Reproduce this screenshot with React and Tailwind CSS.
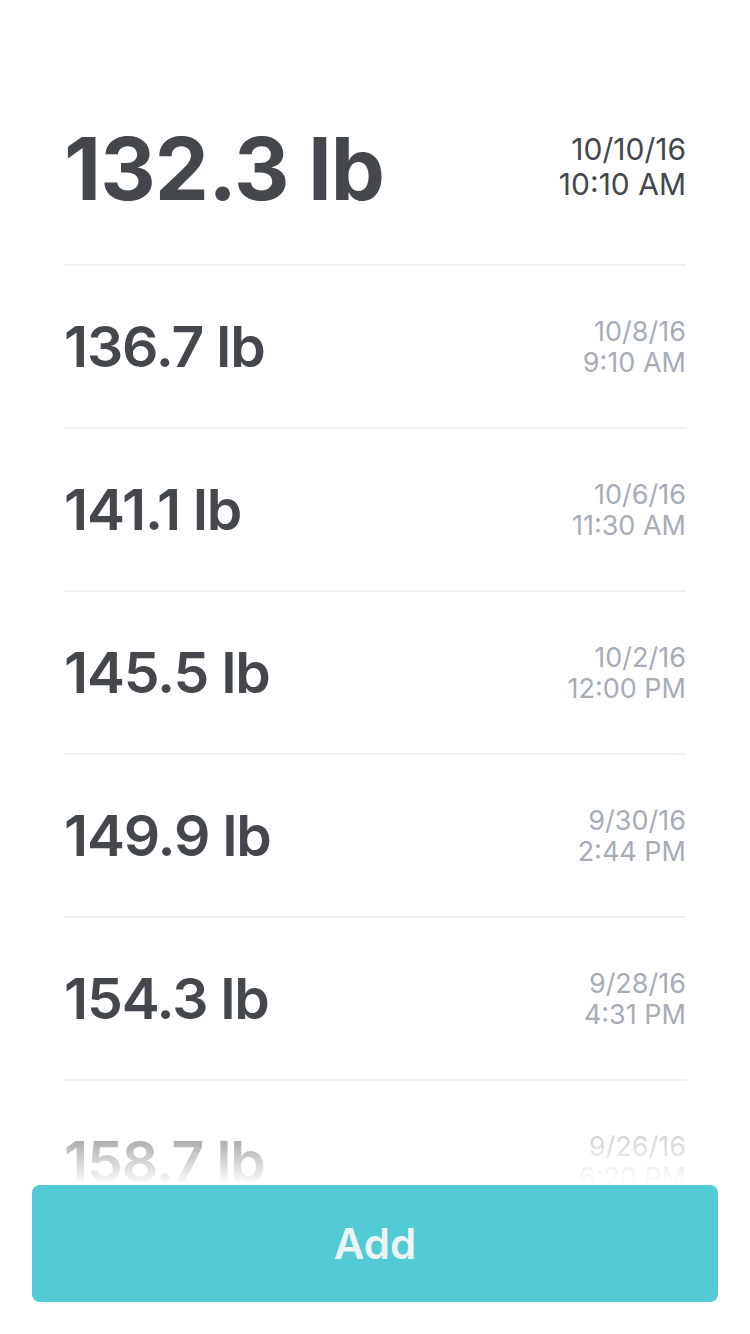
const entries = [
  { weight: '136.7 lb', date: '10/8/16', time: '9:10 AM' },
  { weight: '141.1 lb', date: '10/6/16', time: '11:30 AM' },
  { weight: '145.5 lb', date: '10/2/16', time: '12:00 PM' },
  { weight: '149.9 lb', date: '9/30/16', time: '2:44 PM' },
  { weight: '154.3 lb', date: '9/28/16', time: '4:31 PM' },
  { weight: '158.7 lb', date: '9/26/16', time: '6:20 PM' },
];

function App() {
  return (
    <div
      className="relative h-[1334px] w-[750px] overflow-hidden bg-white text-[#44474c]"
      style={{ fontFamily: 'Inter, "Open Sans", sans-serif' }}
    >
      <div className="px-[64px] pt-[110px]">
        {/* latest entry */}
        <div className="flex h-[156px] items-start justify-between border-b-2 border-[#f1f1f5] pt-[14px]">
          <div className="text-[86px] font-bold leading-[90px] tracking-[-0.01em]">132.3 lb</div>
          <div className="pt-[8px] text-right text-[30px] leading-[35px]">
            <div>10/10/16</div>
            <div>10:10 AM</div>
          </div>
        </div>

        {entries.map((item) => (
          <div
            key={item.date}
            className="flex h-[163px] items-center justify-between border-b-2 border-[#f1f1f5]"
          >
            <div className="text-[57px] font-semibold leading-none tracking-[-0.02em]">{item.weight}</div>
            <div className="text-right text-[27px] leading-[31px] text-[#a8acb6]">
              <div>{item.date}</div>
              <div>{item.time}</div>
            </div>
          </div>
        ))}
      </div>

      {/* bottom fade + button */}
      <div className="absolute inset-x-0 bottom-0">
        <div className="h-[100px] bg-gradient-to-b from-white/0 to-white" />
        <div className="bg-white px-[32px] pb-[32px]">
          <button className="flex h-[117px] w-full items-center justify-center rounded-[8px] bg-[#52cbd4] text-[42px] font-semibold text-[#eef3f8]">
            Add
          </button>
        </div>
      </div>
    </div>
  );
}

export default App;
